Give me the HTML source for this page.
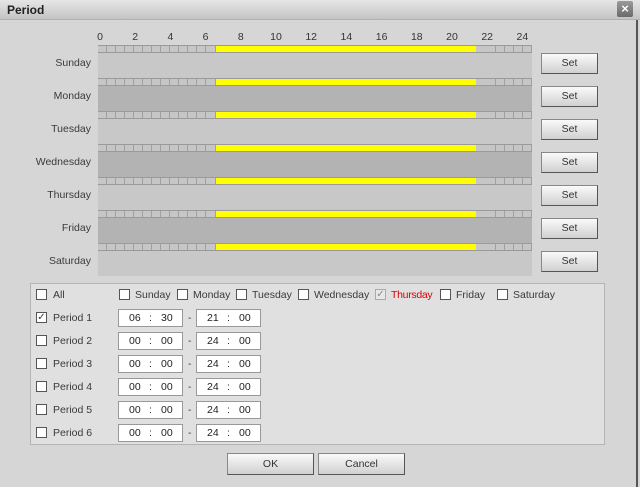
<!DOCTYPE html>
<html><head><meta charset="utf-8"><style>
*{margin:0;padding:0;box-sizing:border-box}
body{width:640px;height:487px;background:#d6d6d6;font-family:"Liberation Sans",sans-serif;font-size:10.5px;color:#3a3a3a;position:relative;overflow:hidden}
.abs{position:absolute}
.title{left:0;top:0;width:640px;height:20px;background:linear-gradient(#e6e6e6,#c4c4c4);border-bottom:1px solid #b0b0b0}
.title b{position:absolute;left:7px;top:3px;font-size:12px;color:#222}
.close{left:617px;top:1px;width:16px;height:16px;background:linear-gradient(#9a9a9a,#6a6a6a);border-radius:2px;color:#fff;font-size:13px;line-height:15px;text-align:center;font-weight:bold}
.edge{left:636px;top:20px;width:2px;height:467px;background:#555}
.hr{top:31px;font-size:10.5px;color:#333;width:20px;text-align:center}
.day{width:91px;text-align:right;left:0;font-size:10.5px;color:#3a3a3a}
.stripe{left:98px;width:434px;height:8px;background:#c6c6c6;border-top:1px solid #9a9a9a;border-bottom:1px solid #9a9a9a}
.cell{position:absolute;top:0;height:6px;border-right:1px solid #a0a0a0}
.yel{top:0;height:6px;background:#ffff00;position:absolute}
.body{left:98px;width:434px;height:25px}
.btn{background:linear-gradient(#fafafa,#d0d0d0);border:1px solid #555;border-top-color:#888;border-left-color:#888;text-align:center;color:#333;font-size:10.5px}
.set{left:541px;width:57px;height:21px;line-height:19px}
.panel{left:30px;top:283px;width:575px;height:162px;border:1px solid #b4b4b4;background:#e0e0e0}
.cb{width:11px;height:11px;border:1px solid #555;background:#fff}
.lbl{font-size:10.5px;color:#3a3a3a}
.tin{width:65px;height:18px;border:1px solid #999;background:#fff;font-size:10.5px;color:#222}
.tin span{position:absolute;top:2px}
</style></head><body>
<div class="abs title"><b>Period</b></div>
<div class="abs close">×</div>
<div class="abs edge"></div>
<div id="tl"></div>
<div class="abs panel"></div>
<div id="pn"></div>
<div class="abs btn" style="left:227px;top:453px;width:87px;height:22px;line-height:20px">OK</div>
<div class="abs btn" style="left:318px;top:453px;width:87px;height:22px;line-height:20px">Cancel</div>
<script>
var h='';var x0=98,W=434;
for(var i=0;i<=24;i+=2){h+='<div class="abs hr" style="left:'+(100+i*17.6-10)+'px">'+i+'</div>';}
var days=['Sunday','Monday','Tuesday','Wednesday','Thursday','Friday','Saturday'];
for(var d=0;d<7;d++){var y=45+d*33;
h+='<div class="abs stripe" style="top:'+y+'px">';
for(var c=0;c<48;c++){var cx=c*W/48;if(cx>=118&&cx<380)continue;h+='<div class="cell" style="left:'+cx+'px;width:'+(W/48)+'px"></div>';}
h+='<div class="yel" style="left:118px;width:260px"></div></div>';
h+='<div class="abs body" style="top:'+(y+8)+'px;background:'+(d%2?'#b3b3b3':'#c8c8c8')+'"></div>';
h+='<div class="abs day" style="top:'+(y+12)+'px">'+days[d]+'</div>';
h+='<div class="abs btn set" style="top:'+(y+8)+'px">Set</div>';}
document.getElementById('tl').innerHTML=h;
var p='';
p+='<div class="abs cb" style="left:36px;top:289px"></div><div class="abs lbl" style="left:53px;top:289px">All</div>';
var dx=[[119,'Sunday'],[177,'Monday'],[236,'Tuesday'],[298,'Wednesday'],[375,'Thursday'],[440,'Friday'],[497,'Saturday']];
dx.forEach(function(a){var th=a[1]=='Thursday';p+='<div class="abs cb" style="left:'+a[0]+'px;top:289px;'+(th?'border-color:#aaa;background:#e8e8e8;color:#888;font-size:10px;line-height:9px;text-align:center':'')+'">'+(th?'✓':'')+'</div><div class="abs lbl" style="left:'+(a[0]+16)+'px;top:289px;'+(th?'color:#e00000;letter-spacing:-0.3px':'')+'">'+a[1]+'</div>';});
var t=[['06','30','21','00'],['00','00','24','00'],['00','00','24','00'],['00','00','24','00'],['00','00','24','00'],['00','00','24','00']];
for(var i=0;i<6;i++){var y=309+i*23;
p+='<div class="abs cb" style="left:36px;top:'+(y+3)+'px;font-size:10px;line-height:9px;text-align:center">'+(i==0?'✓':'')+'</div><div class="abs lbl" style="left:53px;top:'+(y+3)+'px">Period '+(i+1)+'</div>';
p+='<div class="abs tin" style="left:118px;top:'+y+'px"><span style="left:10px">'+t[i][0]+'</span><span style="left:30px">:</span><span style="left:42px">'+t[i][1]+'</span></div>';
p+='<div class="abs lbl" style="left:188px;top:'+(y+3)+'px">-</div>';
p+='<div class="abs tin" style="left:196px;top:'+y+'px"><span style="left:10px">'+t[i][2]+'</span><span style="left:30px">:</span><span style="left:42px">'+t[i][3]+'</span></div>';}
document.getElementById('pn').innerHTML=p;
</script>
</body></html>
